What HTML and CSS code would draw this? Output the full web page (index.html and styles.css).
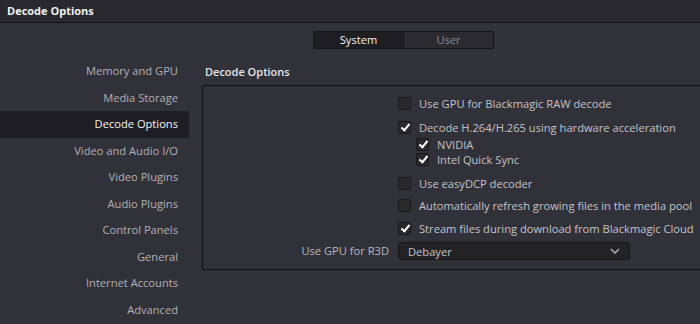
FILE: index.html
```html
<!DOCTYPE html>
<html lang="en">
<head>
  <meta charset="UTF-8">
  <title>Decode Options</title>
  <link rel="stylesheet" href="styles.css">
</head>
<body>
  <div class="titlebar">Decode Options</div>

  <div class="tabs-row">
    <div class="tabs">
      <div class="tab active">System</div>
      <div class="tab">User</div>
    </div>
  </div>

  <div class="layout">
    <ul class="sidebar">
      <li>Memory and GPU</li>
      <li>Media Storage</li>
      <li class="selected">Decode Options</li>
      <li>Video and Audio I/O</li>
      <li>Video Plugins</li>
      <li>Audio Plugins</li>
      <li>Control Panels</li>
      <li>General</li>
      <li>Internet Accounts</li>
      <li>Advanced</li>
    </ul>

    <div class="main">
      <h2>Decode Options</h2>
      <div class="panel">
        <div class="opt"><span class="box"></span>Use GPU for Blackmagic RAW decode</div>
        <div class="opt gap-8"><span class="box checked"></span>Decode H.264/H.265 using hardware acceleration</div>
        <div class="opt sub gap-2"><span class="box checked"></span>NVIDIA</div>
        <div class="opt sub"><span class="box checked"></span>Intel Quick Sync</div>
        <div class="opt gap-8"><span class="box"></span>Use easyDCP decoder</div>
        <div class="opt gap-6"><span class="box"></span>Automatically refresh growing files in the media pool</div>
        <div class="opt gap-7"><span class="box checked"></span>Stream files during download from Blackmagic Cloud</div>
        <div class="field-label">Use GPU for R3D</div>
        <div class="select">
          <span>Debayer</span>
          <svg width="10" height="6" viewBox="0 0 10 6"><path d="M1 1 L5 5 L9 1" fill="none" stroke="#a8a8ac" stroke-width="1.6"/></svg>
        </div>
      </div>
    </div>
  </div>
</body>
</html>
```

FILE: styles.css
```css
* {
  box-sizing: border-box;
}

html, body {
  margin: 0;
  height: 100%;
  overflow: hidden;
}

body {
  font-family: 'Open Sans', 'Liberation Sans', sans-serif;
  font-size: 11.15px;
  background-color: #31313a;
  color: #c4c4c8;
}

.titlebar {
  height: 23px;
  line-height: 21px;
  padding-left: 7px;
  background-color: #28282e;
  border-bottom: 1px solid #111114;
  color: #f0f0f0;
  font-size: 11px;
  font-weight: bold;
}

.tabs-row {
  padding-top: 8px;
  padding-left: 313px;
}

.tabs {
  display: flex;
  width: 181px;
  height: 18px;
  border: 1px solid #151518;
  border-radius: 2px;
  overflow: hidden;
}

.tab {
  flex: 1;
  text-align: center;
  line-height: 16px;
  background-color: #2a2a2f;
  color: #8a8a8f;
}

.tab.active {
  background-color: #1e1e22;
  color: #f2f2f2;
  border-right: 1px solid #151518;
}

.layout {
  display: flex;
}

.sidebar {
  list-style: none;
  margin: 0;
  padding: 9px 0 0 0;
  width: 189px;
  flex-shrink: 0;
}

.sidebar li {
  height: 26.5px;
  line-height: 26px;
  text-align: right;
  padding-right: 11px;
  color: #b2b2b6;
}

.sidebar li.selected {
  background-color: #1e1e22;
  color: #f4f4f4;
}

.main {
  flex: 1;
  padding: 15px 0 0 13px;
}

.main h2 {
  margin: 0 0 5px 0;
  padding-left: 3px;
  height: 16px;
  line-height: 16px;
  font-size: 11px;
  font-weight: 600;
  color: #e6e6e8;
}

.panel {
  display: grid;
  grid-template-columns: 186px 1fr;
  column-gap: 9px;
  padding: 9px 0;
  border: 1px solid #121215;
  border-right: none;
  border-radius: 2px 0 0 2px;
}

.opt {
  grid-column: 2;
  display: flex;
  align-items: center;
  height: 16px;
  white-space: nowrap;
}

.opt.sub {
  height: 15px;
  padding-left: 18px;
}

.gap-2 { margin-top: 2px; }
.gap-6 { margin-top: 6px; }
.gap-7 { margin-top: 7px; }
.gap-8 { margin-top: 8px; }

.box {
  position: relative;
  width: 13px;
  height: 13px;
  margin-right: 8px;
  background-color: #2a2a2d;
  border: 1px solid #18181b;
  border-radius: 2px;
  flex-shrink: 0;
}

.box.checked::after {
  content: "";
  position: absolute;
  left: 4px;
  top: 0px;
  width: 3px;
  height: 7px;
  border-right: 2px solid #ffffff;
  border-bottom: 2px solid #ffffff;
  transform: rotate(40deg);
}

.field-label {
  grid-column: 1;
  margin-top: 6px;
  height: 18px;
  line-height: 18px;
  text-align: right;
  color: #b8b8bc;
}

.select {
  grid-column: 2;
  margin-top: 6px;
  width: 232px;
  height: 18px;
  display: flex;
  align-items: center;
  justify-content: space-between;
  padding: 0 9px;
  background-color: #232326;
  border: 1px solid #17171a;
  border-radius: 3px;
  color: #c4c4c8;
}
```
